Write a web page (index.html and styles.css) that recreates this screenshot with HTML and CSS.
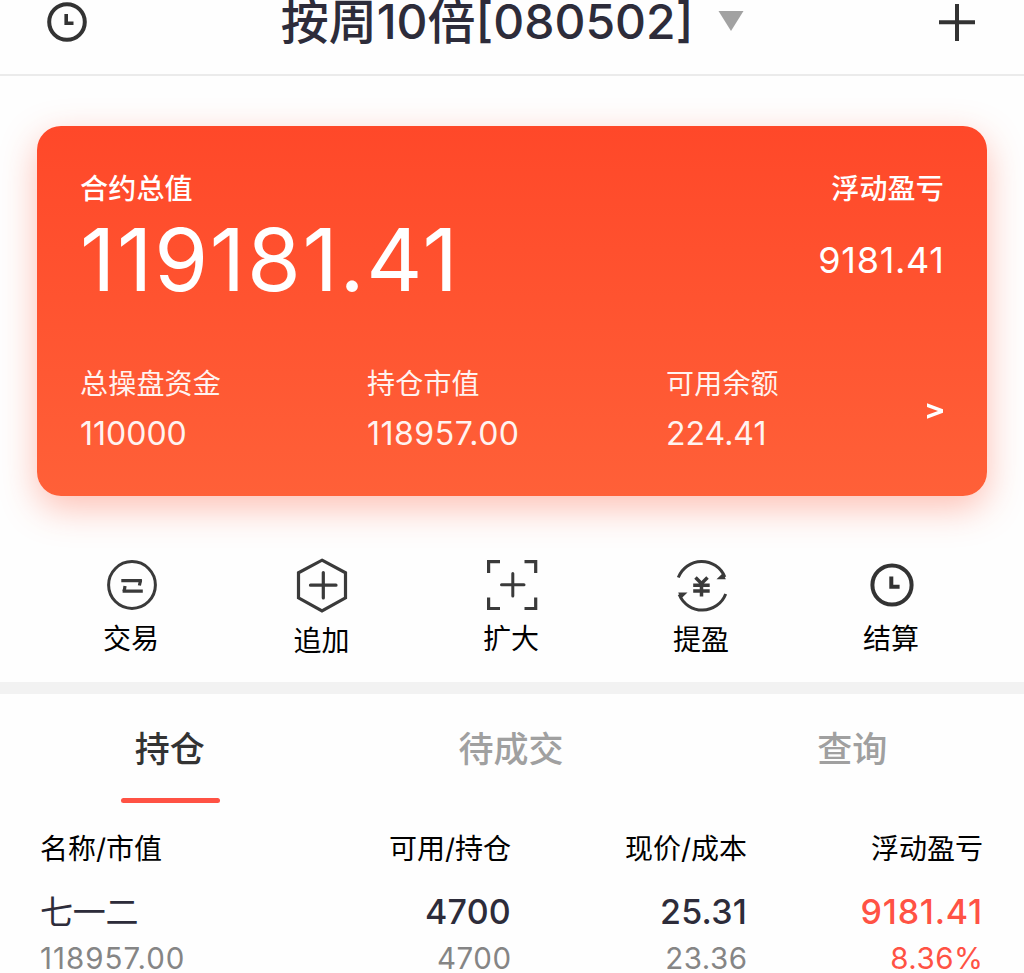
FILE: index.html
```html
<!DOCTYPE html>
<html lang="zh-CN">
<head>
<meta charset="utf-8">
<title>按周10倍</title>
<link rel="stylesheet" href="styles.css">
</head>
<body>
<header class="topbar">
  <svg class="icon-history" viewBox="0 0 40 40" fill="none" stroke="#333"><circle cx="20" cy="20" r="17.8" stroke-width="4"/><path d="M19.2 12v9.3h7.3" stroke-width="3.6"/></svg>
  <div class="title"><h1>按周10倍[080502]</h1><svg class="caret" viewBox="0 0 26 20"><path d="M.5 0h25L13 20z" fill="#a2a2a2"/></svg></div>
  <svg class="icon-add" viewBox="0 0 36 37" stroke="#333" stroke-width="4"><path d="M0 18.200h36M18 0v37"/></svg>
</header>
<section class="card">
  <div class="card-top">
    <div class="total"><div class="label strong">合约总值</div><div class="big">119181.41</div></div>
    <div class="profit"><div class="label strong">浮动盈亏</div><div class="gain">9181.41</div></div>
  </div>
  <div class="card-stats">
    <div class="stat"><div class="label">总操盘资金</div><div class="value">110000</div></div>
    <div class="stat"><div class="label">持仓市值</div><div class="value wide">118957.00</div></div>
    <div class="stat"><div class="label">可用余额</div><div class="value">224.41</div></div>
    <svg class="more" viewBox="0 0 17 16" fill="#fff"><path d="M0 .3L16 6.200v3.600L0 15.700v-3.800L11 8 0 4.100z"/></svg>
  </div>
</section>
<nav class="actions">
  <a class="action"><svg viewBox="0 0 60 60" fill="none" stroke="#3a3a3a"><circle cx="30" cy="30" r="23.400" stroke-width="3"/><path d="M19.300 25.600h20.600M40.800 36.200H20.600" stroke-width="3.200"/><path d="M38.600 25l-1.200 5.500M23 31l-.8 5.200" stroke-width="3.200"/></svg><span>交易</span></a>
  <a class="action low"><svg viewBox="0 0 60 60" fill="none" stroke="#3a3a3a"><path d="M30 5.200l23.500 12.600v25L30 56 6.500 42.800v-25z" stroke-width="3.200"/><path d="M18.500 30.200h25.500M31.300 17.500V43" stroke-width="3.200" stroke-linecap="round"/></svg><span>追加</span></a>
  <a class="action"><svg viewBox="0 0 60 60" fill="none" stroke="#3a3a3a"><path d="M6.600 18V6.600H18M42.500 6.600h11.200V18M6.600 42.500v11H18M42.500 53.500h11.200v-11" stroke-width="3.200"/><path d="M19.500 29.800h22.500M30.800 18.500V41" stroke-width="3" stroke-linecap="round"/></svg><span>扩大</span></a>
  <a class="action low-half"><svg viewBox="0 0 60 60" fill="none" stroke="#3a3a3a"><path d="M6.300 22.500a25 25 0 0 1 46.500-.5M53.700 39a25 25 0 0 1-46.500.5" stroke-width="3"/><path d="M53.800 24.300h-9.300l6.500-6.300zM6.200 37.500h9.300L9 43.800z" fill="#3a3a3a" stroke="none"/><path d="M23.500 22.500l6 6 6-6M21.200 30.300h16.500M21.200 36h16.500M29.500 28v13.500" stroke-width="3.500"/></svg><span>提盈</span></a>
  <a class="action"><svg viewBox="0 0 60 60" fill="none" stroke="#333"><circle cx="30" cy="30" r="19.600" stroke-width="4"/><path d="M29.300 21.500v10.200h8.300" stroke-width="4"/></svg><span>结算</span></a>
</nav>
<div class="tabs">
  <div class="tab active">持仓</div><div class="tab">待成交</div><div class="tab">查询</div>
</div>
<div class="table">
  <div class="row head"><span>名称/市值</span><span>可用/持仓</span><span>现价/成本</span><span>浮动盈亏</span></div>
  <div class="row main"><span class="name">七一二</span><span>4700</span><span>25.31</span><span class="up">9181.41</span></div>
  <div class="row sub"><span>118957.00</span><span>4700</span><span>23.36</span><span class="up">8.36%</span></div>
</div>
</body>
</html>
```
FILE: styles.css
```css
* { box-sizing: border-box; }
html, body { margin: 0; height: 973px; overflow: hidden; }
body { background: #fefefe; font-family: Inter, "Noto Sans CJK SC", sans-serif; color: #000; }
svg { display: block; flex: none; }

.topbar { height: 76px; border-bottom: 2px solid #ebebeb; display: flex; justify-content: space-between; align-items: flex-start; padding: 0 49px 0 47px; }
.icon-history { width: 40px; height: 40px; margin-top: 2px; }
.icon-add { width: 36px; height: 37px; margin-top: 4px; }
.title { display: flex; align-items: flex-start; gap: 25px; margin-right: 1px; }
.title h1 { margin: 0; font-size: 48px; line-height: 43px; font-weight: 500; color: #2d2c3a; white-space: nowrap; }
.caret { width: 26px; height: 20px; margin-top: 11px; }

.card { margin: 50px 37px 0; height: 370px; border-radius: 24px; padding: 43px 43px 0; color: #fff; background: linear-gradient(#ff4829, #ff6038); box-shadow: 0 12px 36px rgba(255, 80, 48, .36); }
.card-top { display: flex; justify-content: space-between; height: 195px; }
.label { font-size: 28px; line-height: 40px; letter-spacing: .2px; opacity: .93; }
.label.strong { font-weight: 450; opacity: 1; }
.big { font-size: 87px; line-height: 102px; letter-spacing: 1.7px; }
.profit { text-align: right; }
.gain { font-size: 36px; line-height: 40px; margin-top: 31px; letter-spacing: .7px; margin-right: -.7px; }
.card-stats { display: grid; grid-template-columns: 287px 299px 1fr 17px; }
.value { font-size: 32px; line-height: 40px; margin-top: 10px; opacity: .93; }
.value.wide { letter-spacing: .5px; }
.more { width: 17px; height: 16px; margin-top: 39px; }

.actions { display: grid; grid-template-columns: repeat(5, 1fr); height: 186px; padding: 59px 37px 0; }
.action { display: flex; flex-direction: column; align-items: center; font-size: 28px; line-height: 40px; }
.action svg { width: 60px; height: 60px; }
.action span { margin: 4px 2px 0 0; }
.action.low span { margin-top: 6px; margin-right: 1px; }
.action.low-half span { margin-top: 5px; }

.tabs { display: grid; grid-template-columns: repeat(3, 1fr); height: 121px; border-top: 12px solid #f2f2f2; }
.tab { justify-self: center; display: flex; justify-content: center; width: 99px; height: 109px; padding: 30px 2px 0 0; font-size: 35px; line-height: 50px; font-weight: 450; color: #a0a0a0; white-space: nowrap; }
.tab.active { color: #333; }
.tab.active::after { content: ""; position: absolute; width: 99px; height: 5px; margin-top: 74px; margin-left: 1px; border-radius: 3px; background: #ff5244; }

.table { padding: 26px 41px 0 40px; }
.row { display: grid; grid-template-columns: 220px 251px 236px 236px; text-align: right; white-space: nowrap; }
.row span:first-child { text-align: left; }
.head { font-size: 28px; line-height: 40px; }
.main { font-size: 34px; line-height: 50px; margin-top: 18px; font-weight: 450; letter-spacing: .2px; color: #2d2c3a; }
.main .name { font-size: 33px; font-weight: 400; letter-spacing: -.3px; }
.main .up { letter-spacing: .8px; }
.sub { font-size: 29.5px; line-height: 28px; margin-top: 7px; letter-spacing: 1px; color: #858585; }
.sub span:not(:first-child) { letter-spacing: .5px; margin-right: -.5px; }
.row .up { color: #ff5244; }
```
